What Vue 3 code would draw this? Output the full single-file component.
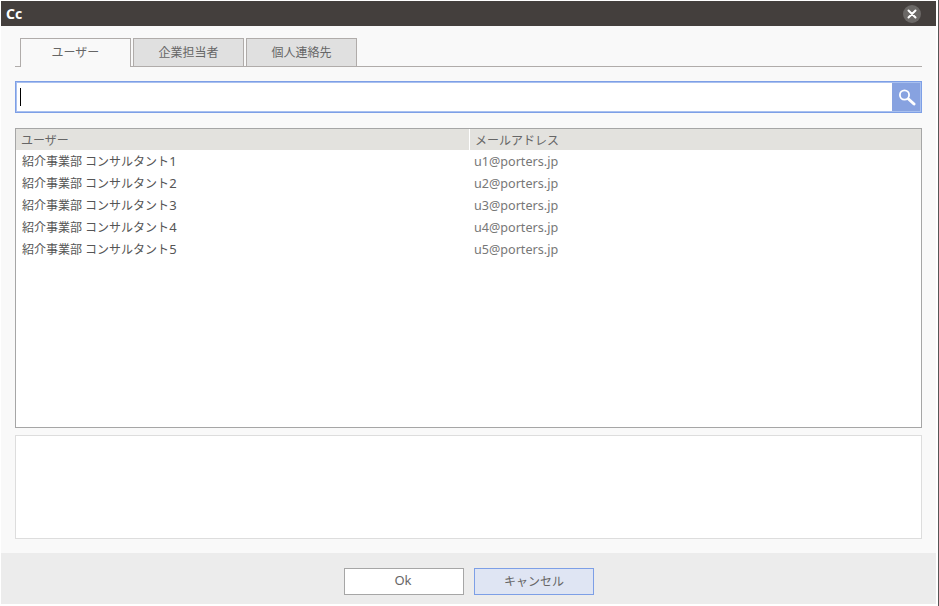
<template>
  <div class="dialog">
    <div class="main">
      <header class="titlebar">
        <span class="title">Cc</span>
        <button class="close" aria-label="close">
          <svg width="10" height="10" viewBox="0 0 10 10"><path d="M1.5 1.5l7 7M8.5 1.5l-7 7" stroke="#fff" stroke-width="2" stroke-linecap="round" /></svg>
        </button>
      </header>
      <div class="content">
        <div class="tabs">
          <div v-for="(t, i) in tabs" :key="t" class="tab" :class="{ active: i === 0 }">{{ t }}</div>
        </div>
        <div class="search">
          <div class="field"><span class="caret"></span></div>
          <button class="search-btn" aria-label="search">
            <svg width="20" height="20" viewBox="0 0 20 20"><circle cx="8.5" cy="8" r="4.6" fill="none" stroke="#fff" stroke-width="1.8" /><path d="M12.5 12l5.5 5" stroke="#fff" stroke-width="3" stroke-linecap="round" /></svg>
          </button>
        </div>
        <div class="list">
          <div class="row head">
            <div class="c1">ユーザー</div>
            <div class="c2">メールアドレス</div>
          </div>
          <div v-for="n in 5" :key="n" class="row">
            <div class="c1 name">{{ '紹介事業部 コンサルタント' }}<span class="latin">{{ n }}</span></div>
            <div class="c2 mail">u{{ n }}@porters.jp</div>
          </div>
        </div>
        <div class="selected"></div>
      </div>
      <footer class="footer">
        <button class="btn ok"><span class="latin">Ok</span></button>
        <button class="btn cancel">キャンセル</button>
      </footer>
    </div>
  </div>
</template>

<script setup>
const tabs = ['ユーザー', '企業担当者', '個人連絡先']
</script>

<style>
html, body { margin: 0; background: #fff; overflow: hidden; }
</style>

<style scoped>
.dialog {
  width: 939px;
  height: 606px;
  box-sizing: border-box;
  padding: 1px 0 0 1px;
  background: #fff;
  border-right: 1px solid #555;
  font-family: "Noto Sans", "Noto Sans CJK JP", sans-serif;
  font-size: 12px;
  color: #666;
}
.latin { font-size: 13px; }
.main {
  width: 935px;
  height: 603px;
  display: flex;
  flex-direction: column;
  background: #f9f9f9;
}
.titlebar {
  height: 25px;
  flex: none;
  background: #443f3d;
  display: flex;
  align-items: center;
  justify-content: space-between;
  padding: 0 15px 0 5px;
}
.title { color: #fff; font-weight: 700; font-size: 14px; }
.close {
  width: 18px;
  height: 18px;
  padding: 0;
  border: 0;
  border-radius: 50%;
  background: #6b6866;
  display: flex;
  align-items: center;
  justify-content: center;
}
.content {
  flex: 1;
  padding: 12px 14px 14px;
  display: flex;
  flex-direction: column;
}
.tabs {
  height: 29px;
  box-sizing: border-box;
  padding-left: 5px;
  border-bottom: 1px solid #b0acaa;
  display: flex;
  gap: 2px;
}
.tab {
  width: 111px;
  height: 28px;
  box-sizing: border-box;
  border: 1px solid #b0acaa;
  border-bottom: 0;
  background: #e0e0e0;
  text-align: center;
  line-height: 28px;
}
.tab.active {
  height: 29px;
  background: #f9f9f9;
}
.search {
  margin-top: 14px;
  height: 32px;
  box-sizing: border-box;
  border: 1px solid #7d9fe6;
  box-shadow: inset 0 0 0 1px #a9c0ef;
  background: #fff;
  display: flex;
  padding: 1px;
}
.field {
  flex: 1;
  display: flex;
  align-items: center;
  padding-left: 3px;
}
.caret {
  width: 1px;
  height: 18px;
  background: #000;
}
.search-btn {
  width: 28px;
  padding: 0;
  border: 0;
  background: #87a2e0;
  display: flex;
  align-items: center;
  justify-content: center;
}
.list {
  margin-top: 15px;
  height: 300px;
  box-sizing: border-box;
  border: 1px solid #a6a6a6;
  background: #fff;
}
.row {
  display: flex;
  height: 22px;
  line-height: 22px;
}
.row.head {
  height: 21px;
  line-height: 23px;
  background: #e3e2de;
}
.c1 { width: 453px; box-sizing: border-box; padding-left: 5px; white-space: nowrap; }
.c2 { flex: 1; box-sizing: border-box; padding-left: 5px; white-space: nowrap; }
.head .c2 { border-left: 1px solid #fff; }
.name { color: #555; padding-left: 6px; }
.mail { color: #777; padding-left: 5px; font-size: 12.6px; line-height: 24px; }
.selected {
  margin-top: 7px;
  height: 104px;
  box-sizing: border-box;
  border: 1px solid #ddd;
  background: #fff;
}
.footer {
  height: 51px;
  flex: none;
  background: #ececec;
  display: flex;
  justify-content: center;
  align-items: flex-start;
  gap: 10px;
  padding: 15px 0 0 1px;
  box-sizing: border-box;
}
.btn {
  width: 120px;
  height: 27px;
  padding: 0 0 2px;
  border: 1px solid #a6a6a6;
  background: #fff;
  font: inherit;
  color: #666;
}
.btn.ok { padding: 0 2px 4px 0; }
.btn.cancel {
  border-color: #7d9fe6;
  background: #dfe5f3;
}
</style>
